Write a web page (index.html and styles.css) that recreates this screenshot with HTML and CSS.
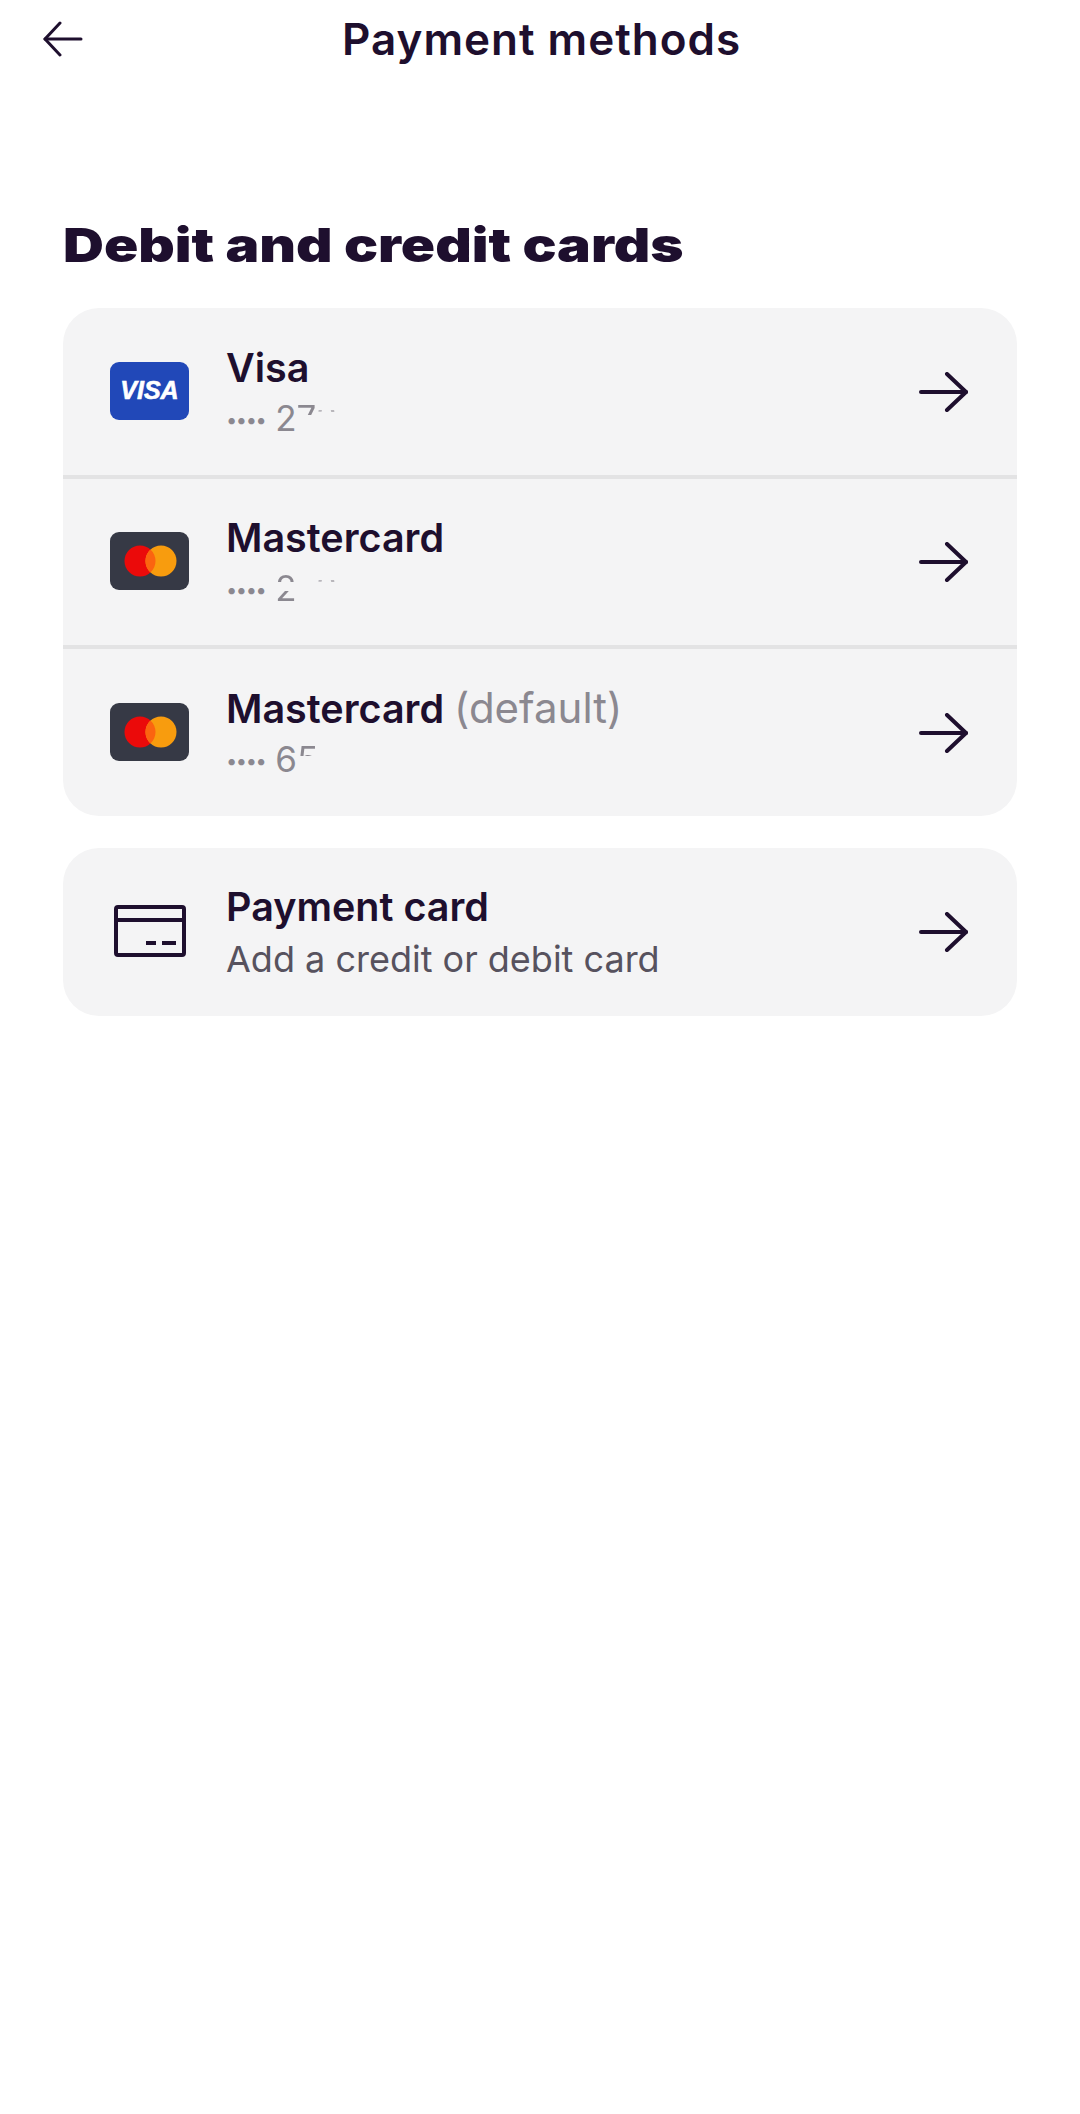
FILE: index.html
```html
<!DOCTYPE html>
<html lang="en">
<head>
    <meta charset="UTF-8">
    <meta name="viewport" content="width=device-width, initial-scale=1.0">
    <title>Payment methods</title>
    <link rel="stylesheet" href="styles.css">
</head>
<body>
    <header class="topbar">
        <svg class="back-icon" viewBox="0 0 42 36" width="42" height="36" fill="none" stroke="#1e0f2e" stroke-width="3" stroke-linecap="round" stroke-linejoin="round">
            <path d="M39 18H3"/>
            <path d="M18 2L3 18L18 34"/>
        </svg>
        <h1 class="page-title">Payment methods</h1>
    </header>

    <main class="content">
        <h2 class="section-title">Debit and credit cards</h2>

        <section class="card-group">
            <div class="row">
                <div class="logo logo-visa"><span>VISA</span></div>
                <div class="row-text">
                    <div class="row-name">Visa</div>
                    <div class="row-number"><span class="dots">••••</span> 2<span class="fade-top">7</span><span class="fade-tiny">3</span></div>
                </div>
                <svg class="arrow" viewBox="0 0 50 40" width="50" height="40" fill="none" stroke="#1e0f2e" stroke-width="4" stroke-linecap="round" stroke-linejoin="round">
                    <path d="M2 20H47"/>
                    <path d="M28 2L47 20L28 38"/>
                </svg>
            </div>
            <div class="row">
                <div class="logo logo-mc">
                    <svg viewBox="0 0 54 38" width="54" height="38">
                        <circle cx="17" cy="19" r="15.5" fill="#eb0a0a"/>
                        <circle cx="38" cy="19" r="15.5" fill="#f89c0e"/>
                        <path d="M27.5 7.6a15.5 15.5 0 0 1 0 22.8a15.5 15.5 0 0 1 0-22.8z" fill="#fb6410"/>
                    </svg>
                </div>
                <div class="row-text">
                    <div class="row-name">Mastercard</div>
                    <div class="row-number"><span class="dots">••••</span> <span class="fade-mid">2</span><span class="fade-none">7</span><span class="fade-tiny">3</span></div>
                </div>
                <svg class="arrow" viewBox="0 0 50 40" width="50" height="40" fill="none" stroke="#1e0f2e" stroke-width="4" stroke-linecap="round" stroke-linejoin="round">
                    <path d="M2 20H47"/>
                    <path d="M28 2L47 20L28 38"/>
                </svg>
            </div>
            <div class="row">
                <div class="logo logo-mc">
                    <svg viewBox="0 0 54 38" width="54" height="38">
                        <circle cx="17" cy="19" r="15.5" fill="#eb0a0a"/>
                        <circle cx="38" cy="19" r="15.5" fill="#f89c0e"/>
                        <path d="M27.5 7.6a15.5 15.5 0 0 1 0 22.8a15.5 15.5 0 0 1 0-22.8z" fill="#fb6410"/>
                    </svg>
                </div>
                <div class="row-text">
                    <div class="row-name">Mastercard <span class="row-default">(default)</span></div>
                    <div class="row-number"><span class="dots">••••</span> 6<span class="fade-top">5</span></div>
                </div>
                <svg class="arrow" viewBox="0 0 50 40" width="50" height="40" fill="none" stroke="#1e0f2e" stroke-width="4" stroke-linecap="round" stroke-linejoin="round">
                    <path d="M2 20H47"/>
                    <path d="M28 2L47 20L28 38"/>
                </svg>
            </div>
        </section>

        <section class="card-group">
            <div class="row">
                <div class="logo logo-plain">
                    <svg viewBox="0 0 72 52" width="72" height="52" fill="none" stroke="#1e0f2e" stroke-width="4" stroke-linejoin="round">
                        <rect x="2" y="2" width="68" height="48" rx="2"/>
                        <path d="M2 15H70"/>
                        <path d="M32 38H42M48 38H62"/>
                    </svg>
                </div>
                <div class="row-text">
                    <div class="row-name">Payment card</div>
                    <div class="row-sub">Add a credit or debit card</div>
                </div>
                <svg class="arrow" viewBox="0 0 50 40" width="50" height="40" fill="none" stroke="#1e0f2e" stroke-width="4" stroke-linecap="round" stroke-linejoin="round">
                    <path d="M2 20H47"/>
                    <path d="M28 2L47 20L28 38"/>
                </svg>
            </div>
        </section>
    </main>
</body>
</html>
```

FILE: styles.css
```css
/* Page */
body {
    margin: 0;
    min-height: 2114px;
    background-color: #fff;
    color: #1e0f2e;
    font-family: Inter, "Noto Sans", sans-serif;
}

/* Top bar */
.topbar {
    display: flex;
    align-items: center;
    height: 78px;
    padding-left: 42px;
}
.back-icon {
    flex-shrink: 0;
}
.page-title {
    margin: 0 0 0 258px;
    font-size: 44px;
    font-weight: 600;
    letter-spacing: 1px;
    white-space: nowrap;
}

/* Main content */
.content {
    padding: 137px 63px 0;
}
.section-title {
    width: max-content;
    margin: 0 0 33px;
    font-size: 47px;
    line-height: 60px;
    font-weight: 900;
    white-space: nowrap;
    transform: scaleX(1.205);
    transform-origin: left center;
}
.card-group {
    margin-bottom: 32px;
    background-color: #f4f4f5;
    border-radius: 36px;
    overflow: hidden;
}
.row {
    display: flex;
    align-items: center;
    height: 166px;
    padding: 0 48px 0 47px;
    border-top: 4px solid #e3e3e4;
}
.row:first-child {
    height: 167px;
    border-top: none;
}
.row:last-child {
    height: 167px;
}
.row:only-child {
    height: 168px;
}

/* Card logos */
.logo {
    display: flex;
    align-items: center;
    justify-content: center;
    flex-shrink: 0;
    width: 79px;
    height: 58px;
    margin-bottom: 2px;
    border-radius: 9px;
}
.logo-visa {
    background-color: #2148b8;
    color: #fff;
    font-family: "Liberation Sans", sans-serif;
    font-size: 25px;
    font-weight: 700;
    font-style: italic;
    -webkit-text-stroke: 0.6px #fff;
}
.logo-mc {
    background-color: #363945;
}
.logo-plain {
    width: 79px;
}

/* Row text */
.row-text {
    flex: 1;
    margin-left: 37px;
}
.row-name {
    font-size: 39.5px;
    line-height: 50px;
    font-weight: 600;
    white-space: nowrap;
}
.row-default {
    color: #8b8890;
    font-size: 42px;
    font-weight: 400;
}
.row-sub {
    margin-top: 4px;
    color: #57525e;
    font-size: 36px;
    line-height: 46px;
}
.row-number {
    margin-top: 4px;
    color: #8b8890;
    font-size: 35px;
    line-height: 42px;
}
.dots {
    font-size: 20px;
    letter-spacing: -1.4px;
    vertical-align: 4px;
}

/* Numbers hidden in the source picture, only bits of them show */
.fade-top, .fade-mid, .fade-tiny, .fade-none {
    color: transparent;
    -webkit-background-clip: text;
    background-clip: text;
}
.fade-top {
    background-image: linear-gradient(#8b8890 42%, transparent 42%);
}
.fade-mid {
    background-image: linear-gradient(#8b8890 36%, transparent 36%, transparent 56%, #8b8890 56%);
}
.fade-tiny {
    background-image: linear-gradient(transparent 30%, #b8b6bb 30%, #b8b6bb 36%, transparent 36%);
}

.arrow {
    flex-shrink: 0;
}
```
